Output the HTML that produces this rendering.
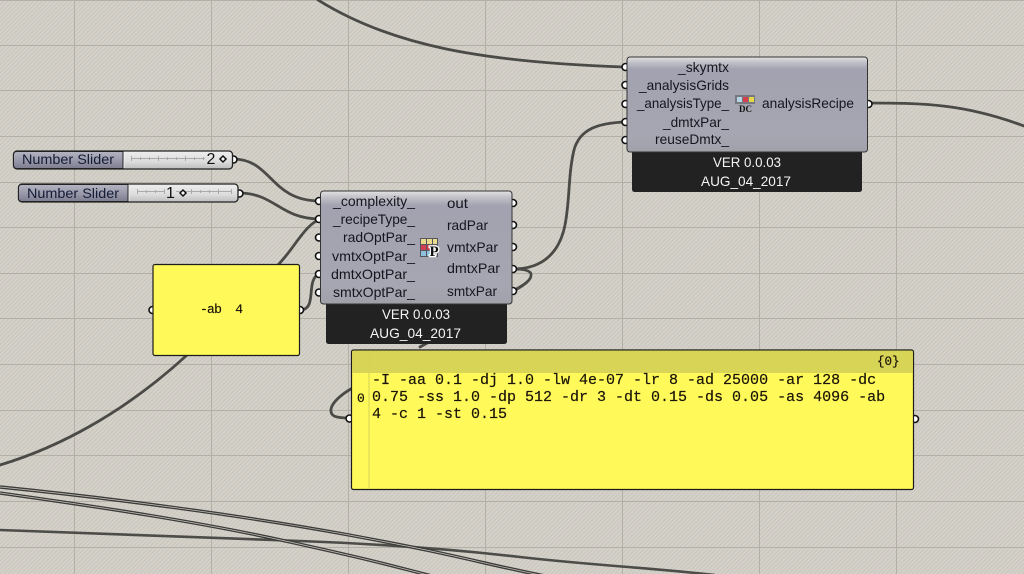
<!DOCTYPE html>
<html><head><meta charset="utf-8"><title>Grasshopper canvas</title>
<style>
html,body{margin:0;padding:0;width:1024px;height:574px;overflow:hidden;background:#d2cfc7}
svg{display:block}
.s{font-family:"Liberation Sans",sans-serif;font-size:14px;fill:#15151f}
.w{font-family:"Liberation Sans",sans-serif;font-size:14px;fill:#f4f4f4}
.m{font-family:"Liberation Mono",monospace;fill:#1a1408;stroke:#1a1408;stroke-width:.2}
.wire{fill:none;stroke:#4a4a46;stroke-width:2.8;stroke-linecap:round}
.port{fill:#fff;stroke:#111;stroke-width:1.6}
</style></head><body>
<svg width="1024" height="574" viewBox="0 0 1024 574" xmlns="http://www.w3.org/2000/svg">
<defs>
<pattern id="h" width="3" height="3" patternUnits="userSpaceOnUse" patternTransform="rotate(-45)">
<rect width="3" height="3" fill="#d5d2ca"/><rect width="3" height="1.2" fill="#c9c6be"/>
</pattern>
<linearGradient id="body" x1="0" y1="0" x2="0" y2="1">
<stop offset="0" stop-color="#e4e4e6"/><stop offset=".05" stop-color="#c4c4ca"/><stop offset=".13" stop-color="#a2a2b0"/><stop offset=".85" stop-color="#a6a6b2"/><stop offset="1" stop-color="#a0a0aa"/>
</linearGradient>
<linearGradient id="lab" x1="0" y1="0" x2="0" y2="1">
<stop offset="0" stop-color="#b4b4c2"/><stop offset=".5" stop-color="#9a9aab"/><stop offset="1" stop-color="#7d7d90"/>
</linearGradient>
<linearGradient id="trk" x1="0" y1="0" x2="0" y2="1">
<stop offset="0" stop-color="#eeeeee"/><stop offset=".6" stop-color="#dcdcdc"/><stop offset="1" stop-color="#bdbdbd"/>
</linearGradient>
</defs>
<rect width="1024" height="574" fill="url(#h)"/>
<g stroke="#b3b0a7" stroke-width="1">
<path d="M74.5 0V574M211.5 0V574M348.5 0V574M485.5 0V574M622.5 0V574M759.5 0V574M896.5 0V574"/>
<path d="M0 .5H1024M0 45.5H1024M0 90.5H1024M0 136.5H1024M0 182.5H1024M0 227.5H1024M0 273.5H1024M0 318.5H1024M0 364.5H1024M0 410.5H1024M0 455.5H1024M0 501.5H1024M0 547.5H1024"/>
</g>

<!-- bottom wires -->
<g fill="none" stroke-linecap="butt">
<path d="M0 530C110 534 220 538 300 541S450 549 520 557 640 567 715 575" stroke="#4c4c48" stroke-width="2.6"/>
<path d="M0 487C110 498 240 515 349 535S480 563 545 576" stroke="#3c3c3a" stroke-width="3.4"/>
<path d="M0 487C110 498 240 515 349 535S480 563 545 576" stroke="#c8c5bd" stroke-width=".7"/>
<path d="M0 493C100 507 200 522 290 542S385 564 432 576" stroke="#3c3c3a" stroke-width="3.4"/>
<path d="M0 493C100 507 200 522 290 542S385 564 432 576" stroke="#c8c5bd" stroke-width=".7"/>
</g>

<!-- wires -->
<path class="wire" d="M318 0C390 45 480 62 624 67"/>
<path class="wire" d="M0 465C60 447 125 412 187 355L278 265C296 246 304 226 320 219"/>
<path class="wire" d="M233 159C272 159 270 201 320 201"/>
<path class="wire" d="M239 193C275 193 280 219 320 219"/>
<path class="wire" d="M513 269C545 269 560 250 565 225C570 200 568 175 574 150C580 128 600 123 625 122"/>
<path class="wire" d="M513 291C524 285 532 280 531 274C530 270 522 269 513 269"/>
<path class="wire" d="M522 286C495 303 460 325 420 347"/>
<path class="wire" d="M868 103C925 103 965 104 1024 126"/>
<path class="wire" d="M300 310C318 310 305 280 319 274"/>
<path class="wire" d="M349 418C335 418 330 416 331 409C333 400 345 392 356 386"/>

<!-- sliders -->
<g>
<circle class="port" cx="233.500" cy="159.500" r="3.500"/>
<rect x="13.500" y="151" width="219" height="18" rx="3.500" fill="url(#trk)" stroke="#222" stroke-width="1.300"/>
<path d="M16.500 151.500H123V168.500H16.500A3 3 0 0 1 13.500 165.500V154.500A3 3 0 0 1 16.500 151.500Z" fill="url(#lab)" stroke="#222"/>
<rect x="123.500" y="152" width="1" height="16" fill="#f4f4f4"/>
<text class="s" x="22" y="164" textLength="92" lengthAdjust="spacingAndGlyphs" style="fill:#141c36">Number Slider</text>
<path d="M131 158.500H205M131.500 156V161M140.500 157V160M149.500 157V160M158.500 156V161M167.500 157V160M176.500 157V160M185.500 156V161M194.500 157V160M203.500 157V160" stroke="#aaa" fill="none"/>
<text class="s" x="206.500" y="164" style="font-size:16px;fill:#111">2</text>
<path d="M223 156L226 159 223 162 220 159Z" fill="#fff" stroke="#111" stroke-width="1.500"/>

<circle class="port" cx="239.500" cy="193.500" r="3.500"/>
<rect x="18.500" y="184" width="219.500" height="18" rx="3.500" fill="url(#trk)" stroke="#222" stroke-width="1.300"/>
<path d="M21.500 184.500H128V201.500H21.500A3 3 0 0 1 18.500 198.500V187.500A3 3 0 0 1 21.500 184.500Z" fill="url(#lab)" stroke="#222"/>
<rect x="128.500" y="185" width="1" height="16" fill="#f4f4f4"/>
<text class="s" x="27" y="198" textLength="92" lengthAdjust="spacingAndGlyphs" style="fill:#141c36">Number Slider</text>
<path d="M137 191.500H165M176 191.500H232M137.500 189V194M146.500 190V193M155.500 190V193M164.500 189V194M191.500 189V194M200.500 190V193M209.500 190V193M218.500 189V194M231.500 189V194" stroke="#aaa" fill="none"/>
<text class="s" x="166" y="198" style="font-size:16px;fill:#111">1</text>
<path d="M183 190L186 193 183 196 180 193Z" fill="#fff" stroke="#111" stroke-width="1.500"/>
</g>

<!-- small panel -->
<circle class="port" cx="152.500" cy="310" r="3.500"/>
<circle class="port" cx="300" cy="310" r="3.500"/>
<rect x="153" y="264.500" width="146.500" height="91" rx="2" fill="#fffa5a" stroke="#1c1c1c" stroke-width="1.200"/>
<text class="m" x="200" y="313" textLength="43" style="font-size:13px" xml:space="preserve">-ab  4</text>

<!-- component 1 -->
<rect x="326" y="296" width="181" height="48" rx="2.500" fill="#222"/>
<g class="port">
<circle cx="319" cy="201" r="3.500"/><circle cx="319" cy="219" r="3.500"/><circle cx="319" cy="237.500" r="3.500"/><circle cx="319" cy="256" r="3.500"/><circle cx="319" cy="274" r="3.500"/><circle cx="319" cy="292.500" r="3.500"/>
<circle cx="513" cy="203" r="3.500"/><circle cx="513" cy="225" r="3.500"/><circle cx="513" cy="247" r="3.500"/><circle cx="513" cy="269" r="3.500"/><circle cx="513" cy="291" r="3.500"/>
</g>
<rect x="320.500" y="191" width="191.500" height="113" rx="3" fill="url(#body)" stroke="#333" stroke-width="1"/>
<g class="s">
<text x="333" y="206" textLength="82" lengthAdjust="spacingAndGlyphs">_complexity_</text>
<text x="333" y="224" textLength="82" lengthAdjust="spacingAndGlyphs">_recipeType_</text>
<text x="343" y="242" textLength="72" lengthAdjust="spacingAndGlyphs">radOptPar_</text>
<text x="332" y="261" textLength="83" lengthAdjust="spacingAndGlyphs">vmtxOptPar_</text>
<text x="331" y="279" textLength="84" lengthAdjust="spacingAndGlyphs">dmtxOptPar_</text>
<text x="333" y="297" textLength="82" lengthAdjust="spacingAndGlyphs">smtxOptPar_</text>
<text x="447" y="208" textLength="21" lengthAdjust="spacingAndGlyphs">out</text>
<text x="447" y="230" textLength="41" lengthAdjust="spacingAndGlyphs">radPar</text>
<text x="447" y="252" textLength="51" lengthAdjust="spacingAndGlyphs">vmtxPar</text>
<text x="447" y="273" textLength="53" lengthAdjust="spacingAndGlyphs">dmtxPar</text>
<text x="447" y="296" textLength="50" lengthAdjust="spacingAndGlyphs">smtxPar</text>
</g>
<g>
<rect x="420" y="238" width="18" height="19" fill="#55555f"/>
<rect x="421" y="239" width="5" height="5" fill="#e8dc8a"/><rect x="427" y="239" width="5" height="5" fill="#e8dc8a"/><rect x="433" y="239" width="4" height="5" fill="#e8dc8a"/>
<rect x="421" y="245" width="5" height="5" fill="#d04050"/><rect x="427" y="245" width="5" height="5" fill="#d04050"/><rect x="433" y="245" width="4" height="5" fill="#bbb"/>
<rect x="421" y="251" width="5" height="5" fill="#8fc0dc"/><rect x="427" y="251" width="5" height="5" fill="#8fc0dc"/><rect x="433" y="251" width="4" height="5" fill="#bbb"/>
<text x="429.500" y="256" style="font-family:'Liberation Serif',serif;font-size:15px;font-weight:bold;fill:#111;stroke:#fff;stroke-width:2.500px;paint-order:stroke">P</text>
</g>
<text class="w" x="382" y="319" textLength="68" lengthAdjust="spacingAndGlyphs">VER 0.0.03</text>
<text class="w" x="370" y="338" textLength="91" lengthAdjust="spacingAndGlyphs">AUG_04_2017</text>

<!-- component 2 -->
<rect x="632" y="145" width="230" height="47" rx="2.500" fill="#222"/>
<g class="port">
<circle cx="625.500" cy="67" r="3.500"/><circle cx="625.500" cy="85" r="3.500"/><circle cx="625.500" cy="104" r="3.500"/><circle cx="625.500" cy="122" r="3.500"/><circle cx="625.500" cy="140" r="3.500"/>
<circle cx="868.500" cy="104" r="3.500"/>
</g>
<rect x="627" y="57" width="240.500" height="95" rx="3" fill="url(#body)" stroke="#333" stroke-width="1"/>
<g class="s">
<text x="678" y="72" textLength="51" lengthAdjust="spacingAndGlyphs">_skymtx</text>
<text x="639" y="90" textLength="90" lengthAdjust="spacingAndGlyphs">_analysisGrids</text>
<text x="637" y="108" textLength="92" lengthAdjust="spacingAndGlyphs">_analysisType_</text>
<text x="663" y="127" textLength="66" lengthAdjust="spacingAndGlyphs">_dmtxPar_</text>
<text x="655" y="144" textLength="74" lengthAdjust="spacingAndGlyphs">reuseDmtx_</text>
<text x="762" y="108" textLength="92" lengthAdjust="spacingAndGlyphs">analysisRecipe</text>
</g>
<g>
<rect x="735" y="95" width="20" height="9" fill="#77777f"/>
<rect x="737" y="97" width="5" height="5" fill="#b5d4e6"/><rect x="743" y="97" width="5" height="5" fill="#d84050"/><rect x="749" y="97" width="5" height="5" fill="#e6d84a"/>
<text x="739" y="112" textLength="13" lengthAdjust="spacingAndGlyphs" style="font-family:'Liberation Serif',serif;font-size:9.500px;font-weight:bold;fill:#111">DC</text>
</g>
<text class="w" x="713" y="167" textLength="68" lengthAdjust="spacingAndGlyphs">VER 0.0.03</text>
<text class="w" x="701" y="186" textLength="90" lengthAdjust="spacingAndGlyphs">AUG_04_2017</text>

<!-- big panel -->
<circle class="port" cx="349.500" cy="418.500" r="3.500"/>
<circle class="port" cx="915" cy="419" r="3.500"/>
<rect x="351.500" y="350" width="562" height="139.500" rx="2" fill="#fffa5a" stroke="#1c1c1c" stroke-width="1.200"/>
<rect x="352.200" y="351" width="560.500" height="22" fill="#d8d455"/>
<path d="M369 351V488" stroke="#d6d255" stroke-width="1"/>
<text class="m" x="877" y="365" style="font-size:12.500px">{0}</text>
<text class="m" x="357" y="402" style="font-size:13px">0</text>
<g class="m" style="font-size:15px">
<text x="372" y="384">-I -aa 0.1 -dj 1.0 -lw 4e-07 -lr 8 -ad 25000 -ar 128 -dc</text>
<text x="372" y="401">0.75 -ss 1.0 -dp 512 -dr 3 -dt 0.15 -ds 0.05 -as 4096 -ab</text>
<text x="372" y="418">4 -c 1 -st 0.15</text>
</g>
</svg>
</body></html>
